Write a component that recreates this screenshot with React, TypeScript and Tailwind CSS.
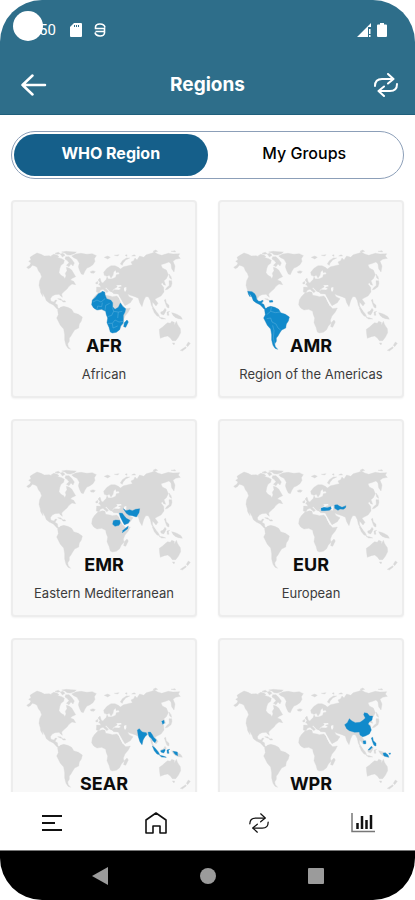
import { useState } from "react";
import clsx from "clsx";

const LAND = [
  // North America
  "M70,222 65,218 74,212 78,205 71,200 78,195 75,188 84,182 96,175 108,179 118,184 132,183 145,188 156,188 170,192 178,197 176,206 168,212 164,222 162,234 168,242 176,246 179,252 183,244 181,236 186,228 184,218 192,220 200,226 206,236 212,246 202,251 196,256 206,260 212,270 201,268 192,275 186,283 178,290 170,298 172,308 167,304 162,299 150,300 142,304 136,312 138,320 147,322 151,316 156,317 150,326 157,330 159,341 168,344 166,348 157,344 150,336 144,330 134,326 124,318 120,308 112,294 114,306 107,294 106,286 102,272 104,258 110,246 106,236 100,228 96,218 90,214 82,212 76,219z",
  // Arctic islands
  "M138,184 146,179 156,181 162,186 152,190 142,189z",
  "M150,176 160,173 166,177 158,179z",
  "M166,178 174,176 180,182 172,187z",
  "M170,172 184,170 198,171 214,172 208,177 196,181 186,180 180,175z",
  "M182,186 192,186 200,194 208,205 204,214 198,208 192,216 184,212 192,204 186,197 180,193z",
  // Greenland
  "M200,184 212,178 228,176 246,179 262,177 274,183 268,192 270,200 264,210 254,217 246,220 240,229 235,240 229,238 224,228 220,216 223,206 216,194 206,189z",
  "M256,231 264,228 271,231 266,236 258,235z",
  // Cuba and the Caribbean
  "M158,312 166,312 174,318 166,316z",
  "M172,319 180,318 182,322 174,322z",
  // South America
  "M158,346 166,338 176,335 188,338 200,344 206,354 220,359 232,367 229,379 223,388 221,400 209,406 203,415 198,424 193,430 193,440 188,448 190,456 197,464 189,461 183,452 179,436 179,420 176,403 166,392 160,380 155,370 160,360z",
  // Africa
  "M278,296 292,291 300,293 302,302 315,304 322,306 335,304 342,310 348,322 354,334 362,342 376,340 370,352 360,364 355,376 357,386 349,394 344,405 334,413 322,415 316,412 312,398 306,384 308,370 304,360 302,350 290,344 276,346 266,340 260,330 262,316 268,306z",
  "M366,376 370,382 362,398 356,396 358,384z",
  // Europe and Asia
  "M275,277 288,278 282,268 294,264 304,254 306,246 310,253 322,252 332,248 334,240 344,238 340,232 334,234 332,226 326,232 324,242 318,250 313,242 306,245 298,242 296,233 306,221 318,213 330,213 340,218 346,223 356,216 366,214 382,210 378,202 386,198 390,190 396,196 404,184 416,188 424,180 440,176 448,172 458,178 470,182 490,176 504,178 524,177 520,184 526,191 512,194 504,200 510,214 507,232 500,222 498,208 492,202 482,206 468,210 472,220 484,226 490,240 484,252 477,258 482,272 476,270 472,264 468,268 476,278 477,292 468,304 456,310 450,314 459,326 453,334 446,326 442,322 443,334 452,348 447,346 439,332 436,318 430,306 422,306 416,318 411,336 404,324 400,311 390,306 376,302 368,298 372,306 384,312 376,324 360,333 353,322 344,306 340,298 326,297 320,291 328,285 342,286 348,282 338,276 330,281 324,285 320,292 314,290 304,279 300,280 310,290 306,294 294,284 286,287 282,294 274,292z",
  "M279,256 285,250 288,260 293,268 281,271 285,264z",
  "M272,264 278,260 279,267 273,268z",
  "M346,208 352,198 364,190 374,190 362,196 354,206 352,212z",
  "M298,188 308,184 316,188 308,193z",
  "M328,182 342,180 338,184z",
  "M360,182 366,180 366,185z",
  "M380,184 388,180 392,184z",
  "M444,170 452,166 458,170 450,172z",
  "M498,170 510,168 512,172z",
  // Japan, Philippines, Indonesia
  "M492,238 498,246 500,254 494,250z",
  "M492,258 500,258 501,266 498,276 488,284 481,286 484,280 493,272z",
  "M478,316 482,314 484,324 492,332 492,340 486,338 482,328z",
  "M442,340 450,346 460,358 464,366 456,364 448,354z",
  "M462,368 472,369 482,373 470,373z",
  "M467,352 474,350 480,341 484,346 480,354 476,361 468,358z",
  "M486,352 494,350 490,354 492,362 487,362z",
  "M500,354 508,356 518,360 528,366 532,374 520,372 510,368 504,362z",
  // Oceania
  "M463,404 472,398 480,390 488,384 496,386 500,380 508,383 508,392 514,380 518,390 526,402 527,414 520,428 512,438 502,438 496,430 488,424 478,426 466,431 464,418z",
  "M502,445 509,445 507,451z",
  "M550,442 556,446 548,456 544,452z",
  "M542,456 544,460 532,469 526,467z",
];

// islands and inlets in the card colour, laid over the land
const WATER = [
  "M357,279 364,277 364,286 360,292 357,286z",
  "M334,272 348,271 350,275 338,278z",
  "M340,306 344,308 352,324 357,333 353,333 345,318z",
];

const REGIONS = [
  {
    code: "AFR",
    name: "African",
    paths: [
      "M280,297 290,293 291,290 299,292 300,300 305,312 318,317 323,324 323,336 330,344 340,338 346,325 350,330 354,336 362,342 360,352 355,362 355,376 354,386 347,394 344,405 334,413 322,415 316,412 312,398 306,384 308,370 304,360 302,350 290,344 276,346 266,340 260,330 262,316 270,309z",
      "M366,376 370,382 362,398 356,396 358,384z",
    ],
    borders:
      "M264,322 276,316 288,322 300,312M276,345 278,334 290,336 292,324M300,348 302,332 314,326M308,366 320,362 326,350 340,352 352,350M308,386 322,386 330,376 342,382 356,380M322,386 324,400 338,394M326,350 322,338M340,352 338,370",
  },
  {
    code: "AMR",
    name: "Region of the Americas",
    paths: [
      "M107,290 120,291 128,297 132,304 134,314 140,320 147,320 151,316 153,320 148,326 155,329 160,341 168,344 166,348 157,344 150,336 144,330 132,324 124,318 120,308 112,296 115,307 110,300z",
      "M172,318 181,317 183,322 173,323z",
      "M158,346 166,338 176,335 188,338 200,344 206,354 220,359 232,367 229,379 223,388 221,400 209,406 203,415 198,424 193,430 193,440 188,448 190,456 197,464 189,461 183,452 179,436 179,420 176,403 166,392 160,380 155,370 160,360z",
    ],
    borders:
      "M178,337 176,350 164,360M176,350 190,354 204,352M164,372 176,370 180,382 192,388 198,400 206,406M182,392 186,408 184,430 188,448",
  },
  {
    code: "EMR",
    name: "Eastern Mediterranean",
    paths: [
      "M355,285 363,291 374,288 382,291 392,287 404,285 402,297 394,310 382,306 372,305 364,299z",
      "M343,298 352,299 358,307 364,314 375,320 370,329 358,333 353,324 346,310z",
      "M325,321 332,319 344,320 346,328 342,335 330,338 323,332z",
      "M370,337 368,345 352,357 354,350z",
    ],
    borders: "",
  },
  {
    code: "EUR",
    name: "European",
    paths: [
      "M327,284 336,281 346,282 356,279 358,285 352,290 338,291 328,291z",
      "M368,274 376,273 382,277 390,281 402,276 400,283 394,287 384,286 378,290 368,284z",
    ],
    borders: "",
  },
  {
    code: "SEAR",
    name: "South-East Asia",
    paths: [
      "M397,292 403,288 408,294 412,298 424,300 426,306 420,312 414,322 411,336 405,328 400,312z",
      "M429,299 436,298 442,306 446,314 454,322 450,330 444,325 440,318 432,311z",
      "M442,340 450,346 460,358 464,366 456,364 448,354z",
      "M467,354 480,350 480,354 476,361 468,358z",
      "M486,352 494,350 490,354 492,362 487,362z",
      "M504,356 517,358 518,369 510,365z",
      "M464,368 474,370 484,374 470,373z",
      "M470,266 477,263 478,272 473,275z",
    ],
    borders: "",
  },
  {
    code: "WPR",
    name: "Western Pacific",
    paths: [
      "M398,276 406,270 412,258 420,265 430,270 444,269 454,262 460,256 455,246 457,240 466,242 473,250 482,250 480,262 472,268 468,274 474,280 478,292 472,304 460,310 452,312 444,307 442,298 428,299 412,294 404,288z",
      "M453,325 461,324 462,333 455,334z",
      "M478,316 482,314 484,324 492,332 492,340 486,338 482,328z",
      "M468,352 478,341 481,344 474,351z",
      "M513,362 520,360 528,367 530,374 516,370z",
      "M530,362 536,361 534,366z",
    ],
    borders: "",
  },
];

type Region = (typeof REGIONS)[number];

function WorldMap({ region }: { region: Region }) {
  return (
    <svg viewBox="33 160 528 312" className="mt-[46px] h-[104px] w-[176px]" aria-hidden="true">
      <g fill="#d9d9d9" stroke="#d9d9d9" strokeWidth="1" strokeLinejoin="round">
        {LAND.map((d) => (
          <path key={d} d={d} />
        ))}
      </g>
      <g fill="#f8f8f8">
        {WATER.map((d) => (
          <path key={d} d={d} />
        ))}
      </g>
      <g fill="#118acb" stroke="#118acb" strokeWidth="1" strokeLinejoin="round">
        {region.paths.map((d) => (
          <path key={d} d={d} />
        ))}
      </g>
      {region.borders && <path d={region.borders} fill="none" stroke="#5fb2de" strokeWidth="1.5" />}
    </svg>
  );
}

function RegionCard({ region }: { region: Region }) {
  return (
    <button
      type="button"
      className="flex h-[198px] flex-col items-center rounded-[4px] border-2 border-[#ededed] bg-[#f8f8f8] shadow-xs"
    >
      <WorldMap region={region} />
      <span className="-mt-[18px] text-[18px] leading-6 font-bold text-[#0c0c0c]">{region.code}</span>
      <span className="mt-1 text-[13px] leading-6 whitespace-nowrap text-[#3c3c3c]">{region.name}</span>
    </button>
  );
}

function SyncIcon({ className }: { className?: string }) {
  return (
    <svg
      viewBox="0 0 24 24"
      className={className}
      fill="none"
      stroke="currentColor"
      strokeLinecap="round"
      strokeLinejoin="round"
      aria-hidden="true"
    >
      <path d="M1 13C1 8 4 6 8 6h11" />
      <path d="M14 1l5.500 5L14 10.500" />
      <path d="M23 11c0 5-3 7-7 7H5" />
      <path d="M10 13.500L4.500 18l5.500 5" />
    </svg>
  );
}

function StatusBar() {
  return (
    <div className="flex h-[56px] items-center pt-1 pr-7 pl-[13px] text-white">
      <span className="-mt-2 size-[30px] rounded-full bg-white" />
      <span className="-ml-1 font-[Roboto] text-[15px] leading-5">50</span>
      <svg viewBox="0 0 12 14" className="ml-[14px] h-[14px] w-3" fill="currentColor" aria-hidden="true">
        <path d="M4 0h7q1 0 1 1v12q0 1-1 1H1q-1 0-1-1V4z" />
        <path d="M4.500 2v2M6.500 2v2M8.500 2v2" stroke="#2e6e8a" />
      </svg>
      <svg
        viewBox="0 0 12 14"
        className="ml-3 h-[14px] w-3"
        fill="none"
        stroke="currentColor"
        strokeWidth="1.600"
        aria-hidden="true"
      >
        <path d="M11 4.500C10 0 2 0 1.500 4v1.500h9v4.500C10 14 2 14 1 9.500M1.500 8.500h9" />
      </svg>
      <svg viewBox="0 0 14 14" className="ml-auto h-[14px] w-[14px]" fill="currentColor" aria-hidden="true">
        <path d="M0 14L14 0v4h-3v10z" />
        <path d="M12 6h1.500v5H12zM12 12h1.500v2H12z" />
      </svg>
      <svg viewBox="0 0 10 14" className="ml-[6px] h-[14px] w-[10px]" fill="currentColor" aria-hidden="true">
        <path d="M3 0h4v1.500h2q1 0 1 1V13q0 1-1 1H1q-1 0-1-1V2.500q0-1 1-1h2z" />
      </svg>
    </div>
  );
}

function Header() {
  return (
    <header className="h-[115px] shrink-0 border-b border-[#1f5f7b] bg-[#2e6e8a]">
      <StatusBar />
      <div className="grid h-[58px] grid-cols-[1fr_auto_1fr] items-center px-[17px] text-white">
        <button type="button" aria-label="Back" className="justify-self-start pl-1">
          <svg
            viewBox="0 0 26 22"
            className="h-[22px] w-[26px]"
            fill="none"
            stroke="currentColor"
            strokeWidth="2.500"
            strokeLinecap="round"
            strokeLinejoin="round"
            aria-hidden="true"
          >
            <path d="M24 11H1.500M11.500 1.500L1.500 11l10 9.500" />
          </svg>
        </button>
        <h1 className="text-[19px] leading-6 font-bold">Regions</h1>
        <button type="button" aria-label="Sync" className="justify-self-end">
          <SyncIcon className="size-6 stroke-2" />
        </button>
      </div>
    </header>
  );
}

const TABS = ["WHO Region", "My Groups"];

function BottomNav() {
  return (
    <nav className="grid h-[59px] shrink-0 grid-cols-4 place-items-center border-b border-[#777] bg-white pt-1 text-[#111]">
      <button type="button" aria-label="Menu">
        <svg viewBox="0 0 22 18" className="h-[18px] w-[22px]" stroke="currentColor" strokeWidth="2" aria-hidden="true">
          <path d="M1 2h20M1 9h13M1 16h20" />
        </svg>
      </button>
      <button type="button" aria-label="Home">
        <svg
          viewBox="0 0 22 22"
          className="size-[22px]"
          fill="none"
          stroke="currentColor"
          strokeWidth="1.600"
          strokeLinejoin="round"
          aria-hidden="true"
        >
          <path d="M1 8l10-7 10 7v13h-6v-7H8v7H1z" />
        </svg>
      </button>
      <button type="button" aria-label="Sync">
        <SyncIcon className="size-5 stroke-[1.500]" />
      </button>
      <button type="button" aria-label="Statistics">
        <svg viewBox="0 0 24 20" className="h-5 w-6" fill="none" stroke="currentColor" aria-hidden="true">
          <path d="M1 0v18.500h23" stroke="#777" strokeWidth="1.500" />
          <path d="M6.500 16v-6M11 16V3M15.500 16V7M20 16V2" strokeWidth="2.500" />
        </svg>
      </button>
    </nav>
  );
}

function SystemBar() {
  return (
    <div className="flex h-[49px] shrink-0 items-center justify-center gap-[92px] bg-black text-[#9b9b9b]">
      <button type="button" aria-label="System back">
        <svg viewBox="0 0 16 18" className="h-[18px] w-4" fill="currentColor" aria-hidden="true">
          <path d="M16 0v18L0 9z" />
        </svg>
      </button>
      <button type="button" aria-label="System home" className="size-4 rounded-full bg-[#9b9b9b]" />
      <button type="button" aria-label="Recent apps" className="size-4 rounded-[1px] bg-[#9b9b9b]" />
    </div>
  );
}

export default function App() {
  const [tab, setTab] = useState(TABS[0]);

  return (
    <div className="flex h-screen flex-col overflow-hidden rounded-[42px] bg-white font-[Inter,sans-serif]">
      <Header />
      <main className="flex-1 overflow-y-auto px-[11px] pt-4 [scrollbar-width:none]">
        <div role="tablist" className="grid h-12 grid-cols-2 rounded-full border border-[#8c9fb8] p-[2px]">
          {TABS.map((label) => (
            <button
              key={label}
              type="button"
              role="tab"
              aria-selected={tab === label}
              onClick={() => setTab(label)}
              className={clsx(
                "rounded-full pb-1 text-[16px] leading-6",
                tab === label ? "bg-[#155f8a] font-bold text-white" : "font-medium text-black"
              )}
            >
              {label}
            </button>
          ))}
        </div>
        <div className="mt-[21px] grid grid-cols-2 gap-[21px] pb-4">
          {REGIONS.map((region) => (
            <RegionCard key={region.code} region={region} />
          ))}
        </div>
      </main>
      <BottomNav />
      <SystemBar />
    </div>
  );
}
